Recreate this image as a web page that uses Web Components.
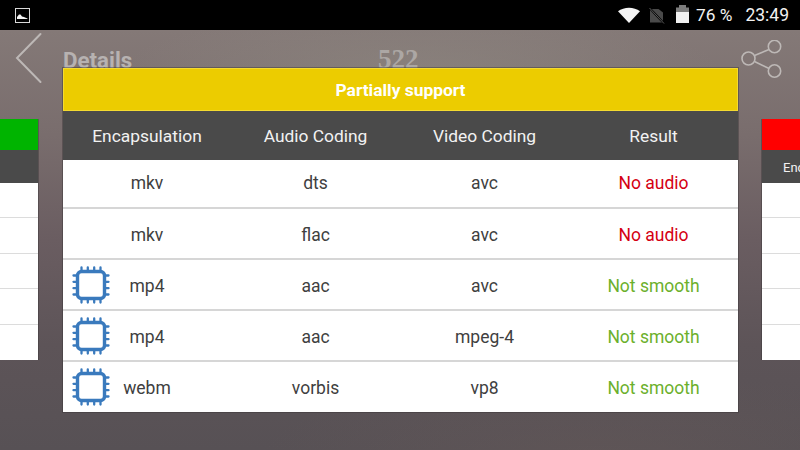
<!DOCTYPE html>
<html>
<head>
<meta charset="utf-8">
<title>Details</title>
<style>
    html, body { margin: 0; padding: 0; width: 800px; height: 450px; overflow: hidden; }
    body { font-family: Roboto, "Liberation Sans", sans-serif; background: #000; }
</style>
</head>
<body>
<app-screen>
    <status-bar slot="status" battery="76 %" time="23:49"></status-bar>
    <top-bar slot="top" title="Details" count="522"></top-bar>
    <side-card slot="left" flag="#00b400"></side-card>
    <side-card slot="right" flag="#ff0000" label="Enc"></side-card>
    <support-dialog slot="dialog" heading="Partially support">
        <support-row enc="mkv" audio="dts" video="avc" result="No audio" kind="bad"></support-row>
        <support-row enc="mkv" audio="flac" video="avc" result="No audio" kind="bad"></support-row>
        <support-row chip enc="mp4" audio="aac" video="avc" result="Not smooth" kind="warn"></support-row>
        <support-row chip enc="mp4" audio="aac" video="mpeg-4" result="Not smooth" kind="warn"></support-row>
        <support-row chip enc="webm" audio="vorbis" video="vp8" result="Not smooth" kind="warn"></support-row>
    </support-dialog>
</app-screen>

<script>
const COLORS = Object.freeze({
    headDark: "#4a4a4a",
    rowLine: "#d6d6d6",
    yellow: "#eccc00",
    textDark: "#404040",
    bad: "#d40012",
    warn: "#6cb02c",
    chip: "#3a7abd",
    edge: "rgba(58,54,56,.45)"
});

const GRID_COLUMNS = "168px 169px 169px 169px";

// attach an open shadow root and fill it
function makeShadow(el, html) {
    const root = el.attachShadow({mode: "open"});
    root.innerHTML = html;
    return root;
}

class AppScreen extends HTMLElement {
    constructor() {
        super();
        makeShadow(this, `
<style>
    :host {
        display: flex;
        flex-direction: column;
        position: relative;
        width: 800px;
        height: 450px;
        overflow: hidden;
    }
    .back {
        flex: 1;
        display: flex;
        flex-direction: column;
        background:
            radial-gradient(ellipse 300px 60px at 420px 40px, rgba(150,146,136,.4), rgba(150,146,136,0)),
            radial-gradient(ellipse 340px 90px at 600px 430px, rgba(112,94,90,.3), rgba(112,94,90,0)),
            linear-gradient(180deg, #847977 0%, #796d6d 25%, #6a5d61 50%, #5d5458 75%, #575155 100%);
    }
    .cards {
        display: flex;
        justify-content: space-between;
        margin-top: 31px;
    }
    .over {
        position: absolute;
        left: 63px;
        top: 68px;
    }
</style>
<slot name="status"></slot>
<div class="back">
    <slot name="top"></slot>
    <div class="cards">
        <slot name="left"></slot>
        <slot name="right"></slot>
    </div>
</div>
<div class="over"><slot name="dialog"></slot></div>`);
    }
}

class StatusBar extends HTMLElement {
    connectedCallback() {
        makeShadow(this, `
<style>
    :host {
        display: flex;
        align-items: center;
        height: 30px;
        background: #000;
        color: #f2f2f2;
        font-size: 17.300px;
        padding: 0 11px 0 15px;
        box-sizing: border-box;
    }
    .gap { flex: 1; }
    svg { display: block; }
    .wifi { margin-right: 9px; }
    .sim { margin: 2px 11px 0 0; }
    .batt { margin: -2px 7px 0 0; }
    .time { margin-left: 13px; font-size: 17.500px; }
</style>
<svg width="15" height="15" viewBox="0 0 15 15">
    <rect x="0.500" y="0.500" width="14" height="14" fill="none" stroke="#d8d8d8"/>
    <path d="M2 11V9l2-2.500h1.500l1.500 2 2 .5 1 .5 2.500 1V11z" fill="#f4f4f4"/>
</svg>
<span class="gap"></span>
<svg class="wifi" width="22" height="16" viewBox="0 0 22 16"><path d="M0 4.300C6-.5 16-.5 22 4.300L11 16z" fill="#f4f4f4"/></svg>
<svg class="sim" width="16" height="16" viewBox="0 0 16 16">
    <path d="M1 14.500V1h8.500L14 4.500v10z" fill="#4a4a4a"/>
    <path d="M1 0.500L15.500 16" stroke="#000" stroke-width="2"/>
    <path d="M0.500 0L15 15.500" stroke="#5a5a5a" stroke-width="1"/>
</svg>
<svg class="batt" width="13" height="18" viewBox="0 0 13 18">
    <path d="M3 0h7v2.500h3V7H0V2.500h3z" fill="#7c7c7c"/>
    <rect y="7" width="13" height="11" fill="#f0f0f0"/>
</svg>
<span>${this.getAttribute("battery")}</span>
<span class="time">${this.getAttribute("time")}</span>`);
    }
}

class TopBar extends HTMLElement {
    connectedCallback() {
        makeShadow(this, `
<style>
    :host {
        display: grid;
        grid-template-columns: 63px 315px auto 1fr auto;
        align-items: start;
        height: 58px;
        color: #b7b2b1;
        font-weight: 700;
        font-size: 22.300px;
    }
    .back { margin: 2px 0 0 14.500px; display: block; }
    .title { margin-top: 16px; line-height: 28px; }
    .count { margin-top: 15px; line-height: 28px; font-family: "Liberation Serif", serif; font-size: 27px; color: #aca7a4; }
    .share { margin: 9.500px 17.500px 0 0; display: block; }
</style>
<svg class="back" width="28" height="52" viewBox="0 0 28 52">
    <path d="M25.500 2L2 26l23.500 24" fill="none" stroke="#bdb8b6" stroke-width="2" stroke-linecap="round"/>
</svg>
<div class="title">${this.getAttribute("title")}</div>
<div class="count">${this.getAttribute("count")}</div>
<span></span>
<svg class="share" width="42" height="38" viewBox="0 0 42 38">
    <g fill="none" stroke="#bdb8b6" stroke-width="1.600">
        <circle cx="7.500" cy="18.500" r="6.500"/>
        <circle cx="33.500" cy="6.500" r="6.200"/>
        <circle cx="33.500" cy="31" r="6.200"/>
        <path d="M13.500 15.500L28 9.500M13.500 21.500l14.500 7"/>
    </g>
</svg>`);
    }
}

class SideCard extends HTMLElement {
    connectedCallback() {
        const isLeft = this.getAttribute("slot") === "left";
        makeShadow(this, `
<style>
    :host {
        display: block;
        width: ${isLeft ? "37.500px" : "38px"};
        overflow: hidden;
        box-shadow: ${isLeft ? "1px" : "-1px"} 0 0 ${COLORS.edge};
    }
    .flag { height: 31px; background: ${this.getAttribute("flag")}; }
    .head {
        height: 33px;
        background: ${COLORS.headDark};
        color: #f2f2f2;
        font-size: 13px;
        line-height: 36px;
        padding-left: 21px;
        white-space: nowrap;
    }
    .row { height: 35.400px; box-sizing: border-box; background: #fff; border-bottom: 1px solid #dcdcdc; }
    .row:last-child { border-bottom: 0; }
</style>
<div class="flag"></div>
<div class="head">${this.getAttribute("label") || ""}</div>
<div class="row"></div><div class="row"></div><div class="row"></div><div class="row"></div><div class="row"></div>`);
    }
}

class SupportDialog extends HTMLElement {
    connectedCallback() {
        makeShadow(this, `
<style>
    :host {
        display: block;
        width: 675px;
        background: #fff;
        box-shadow: 0 0 0 1px ${COLORS.edge};
    }
    .banner {
        height: 43px;
        line-height: 45px;
        background: ${COLORS.yellow};
        box-shadow: inset 0 0 0 1px #f4da30;
        color: #fff;
        font-weight: 700;
        font-size: 17.400px;
        text-align: center;
    }
    .cols {
        display: grid;
        grid-template-columns: ${GRID_COLUMNS};
        height: 49px;
        align-items: center;
        text-align: center;
        background: ${COLORS.headDark};
        color: #f2f2f2;
        font-size: 17.400px;
    }
</style>
<div class="banner">${this.getAttribute("heading")}</div>
<div class="cols">
    <span>Encapsulation</span><span>Audio Coding</span><span>Video Coding</span><span>Result</span>
</div>
<slot></slot>`);
    }
}

class SupportRow extends HTMLElement {
    connectedCallback() {
        const chip = this.hasAttribute("chip") ? `
<svg class="chip" width="38" height="38" viewBox="0 0 38 38">
    <rect x="5.500" y="5.500" width="27" height="27" rx="4" fill="none" stroke="${COLORS.chip}" stroke-width="3.400"/>
    <path d="M9.500 1.500v3M15.800 1.500v3M22.200 1.500v3M28.500 1.500v3M9.500 33.500v3M15.800 33.500v3M22.200 33.500v3M28.500 33.500v3M1.500 9.500h3M1.500 15.800h3M1.500 22.200h3M1.500 28.500h3M33.500 9.500h3M33.500 15.800h3M33.500 22.200h3M33.500 28.500h3"
        stroke="${COLORS.chip}" stroke-width="2.300" stroke-linecap="round"/>
</svg>` : "";
        const resultColor = this.getAttribute("kind") === "bad" ? COLORS.bad : COLORS.warn;
        makeShadow(this, `
<style>
    :host {
        display: grid;
        grid-template-columns: ${GRID_COLUMNS};
        height: 51px;
        padding-top: 2px;
        align-items: center;
        text-align: center;
        box-sizing: border-box;
        border-bottom: 2px solid ${COLORS.rowLine};
        color: ${COLORS.textDark};
        font-size: 17.500px;
        position: relative;
    }
    :host(:first-child) { height: 49px; padding: 0 0 2px; }
    :host(:last-child) { border-bottom: 0; height: 50px; }
    .chip { position: absolute; left: 9px; top: 6px; }
    .result { color: ${resultColor}; }
</style>
${chip}
<span>${this.getAttribute("enc")}</span>
<span>${this.getAttribute("audio")}</span>
<span>${this.getAttribute("video")}</span>
<span class="result">${this.getAttribute("result")}</span>`);
    }
}

customElements.define("app-screen", AppScreen);
customElements.define("status-bar", StatusBar);
customElements.define("top-bar", TopBar);
customElements.define("side-card", SideCard);
customElements.define("support-dialog", SupportDialog);
customElements.define("support-row", SupportRow);
</script>
</body>
</html>
